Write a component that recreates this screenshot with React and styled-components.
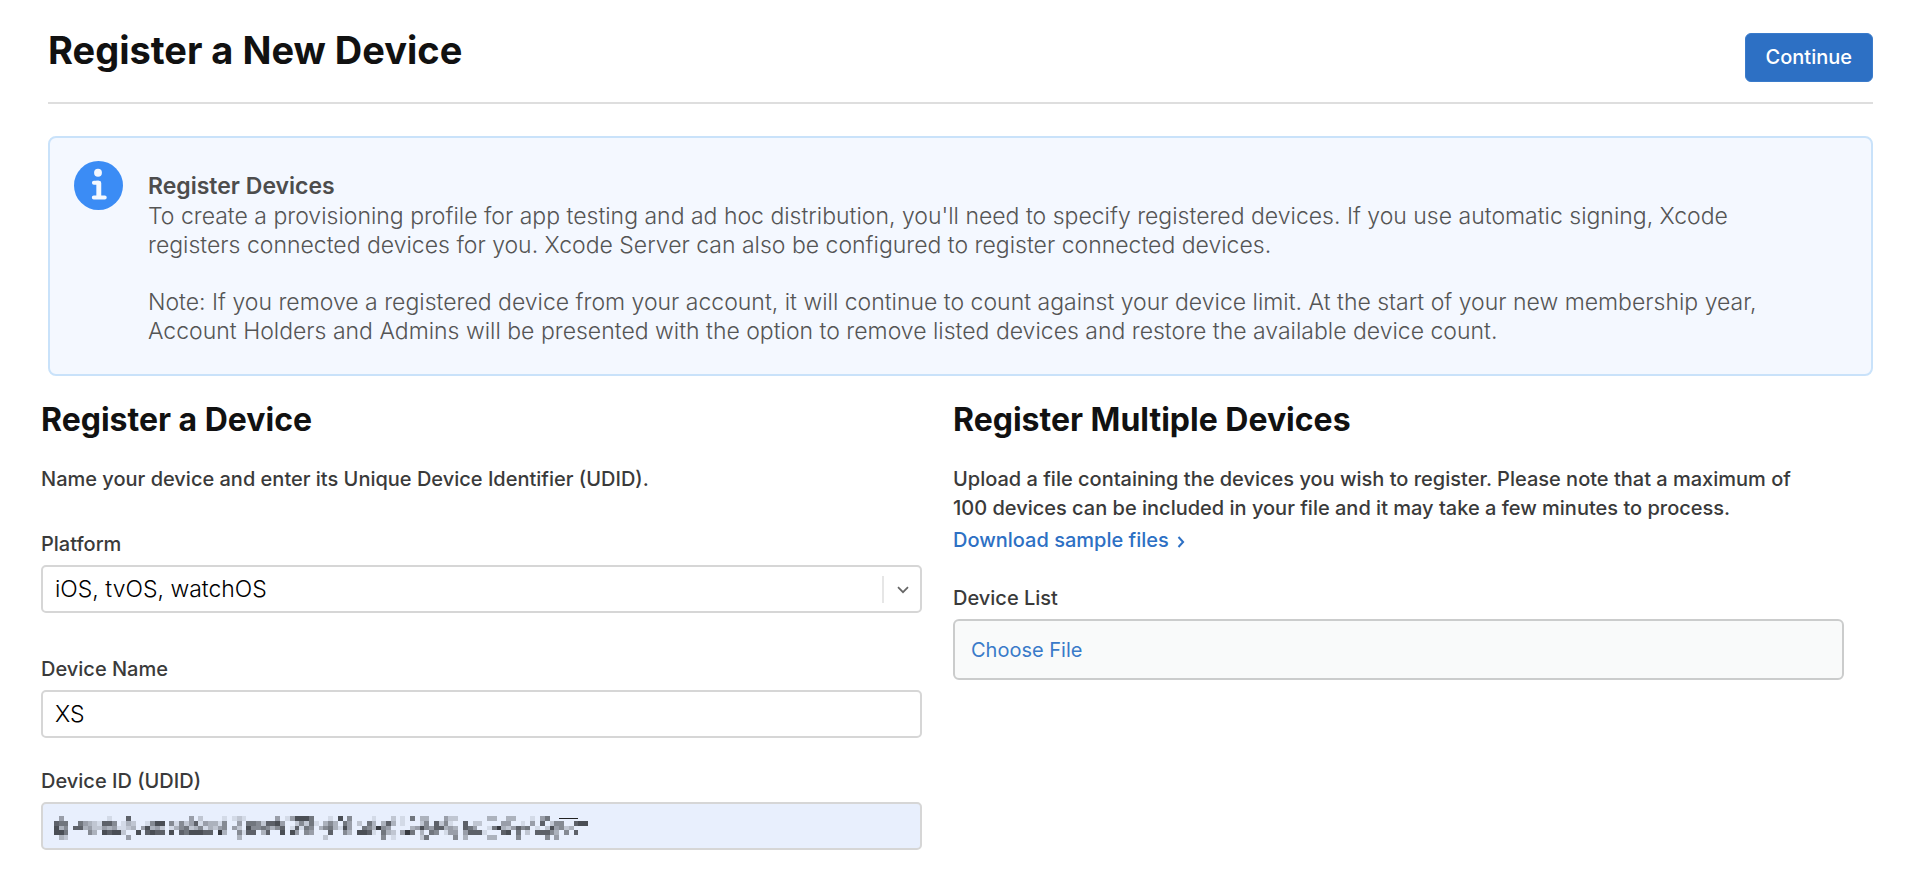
import React from 'react';
import styled, { createGlobalStyle } from 'styled-components';

const GlobalStyle = createGlobalStyle`
  *, *::before, *::after { box-sizing: border-box; }
  body {
    margin: 0;
    background: #fff;
    color: #3a3a3a;
    font-family: Inter, "Liberation Sans", sans-serif;
    font-size: 20px;
    line-height: 29px;
  }
`;

const Page = styled.main`
  padding-bottom: 44px;
`;

const Header = styled.header`
  display: flex;
  justify-content: space-between;
  align-items: flex-start;
  margin: 0 43px 0 48px;
  padding: 33px 0 20px;
  border-bottom: 2px solid #dedede;
`;

const Title = styled.h1`
  margin: 0;
  color: #111;
  font-size: 38px;
  font-weight: 700;
  line-height: 34px;
`;

const PrimaryButton = styled.button`
  height: 49px;
  padding: 0 20px;
  border: 1px solid #3a7bcb;
  border-radius: 6px;
  background: #2d70c4;
  color: #fff;
  font: 500 20px/29px Inter, "Liberation Sans", sans-serif;
  cursor: pointer;
`;

const Notice = styled.section`
  display: flex;
  gap: 25px;
  margin: 32px 43px 0 48px;
  padding: 23px 96px 28px 24px;
  border: 2px solid #c9e2fa;
  border-radius: 8px;
  background: #f4f8ff;
  color: #555;
`;

const InfoIcon = styled.svg`
  flex: none;
  width: 49px;
  height: 49px;
`;

const NoticeBody = styled.div`
  padding-top: 9px;
`;

const NoticeTitle = styled.h2`
  margin: 0;
  color: #4d4d4d;
  font-size: 23px;
  font-weight: 600;
  line-height: 32px;
`;

const NoticeText = styled.p`
  margin: 0;
  font-size: 23px;
  font-weight: 300;
  line-height: 29px;

  & + & { margin-top: 28px; }
`;

const Columns = styled.div`
  display: grid;
  grid-template-columns: 1fr 1fr;
  margin-top: 24px;
  padding: 0 51px 0 41px;
`;

const Column = styled.section`
  padding-right: ${(p) => p.$gutter}px;
`;

const ColumnTitle = styled.h2`
  margin: 0 0 25px;
  color: #111;
  font-size: 32px;
  font-weight: 700;
  line-height: 40px;
`;

const Intro = styled.p`
  margin: 0;
  padding-right: 24px;
  font-size: 20px;
  font-weight: 500;
  line-height: 29px;
`;

const SampleLink = styled.a`
  display: inline-flex;
  align-items: center;
  gap: 8px;
  margin-top: 3px;
  color: #2d70c4;
  font-size: 20px;
  font-weight: 500;
  line-height: 29px;
  text-decoration: none;
`;

const LinkArrow = styled.svg`
  width: 8px;
  height: 12px;
  margin-top: 3px;
`;

const Field = styled.div`
  position: relative;
  display: flex;
  flex-direction: column;
  gap: 6px;
  margin-top: ${(p) => p.$space}px;
`;

const Label = styled.label`
  font-size: 20px;
  font-weight: 500;
  line-height: 29px;
`;

const Control = styled.div`
  position: relative;
  display: flex;
`;

const Select = styled.select`
  appearance: none;
  width: 100%;
  height: 48px;
  padding: 0 48px 0 12px;
  border: 2px solid #d6d6d6;
  border-radius: 5px;
  background: #fff;
  color: #000;
  font: 300 23px/29px Inter, "Liberation Sans", sans-serif;
`;

const SelectMark = styled.span`
  position: absolute;
  top: 11px;
  right: 0;
  display: flex;
  align-items: center;
  justify-content: center;
  width: 40px;
  height: 27px;
  border-left: 2px solid #e6e6e6;
  pointer-events: none;
`;

const Input = styled.input`
  width: 100%;
  height: 48px;
  padding: 0 12px;
  border: 2px solid #d6d6d6;
  border-radius: 5px;
  background: ${(p) => (p.$filled ? '#e8effd' : '#fff')};
  color: #000;
  font: 300 23px/29px Inter, "Liberation Sans", sans-serif;
`;

const Redaction = styled.svg`
  position: absolute;
  top: 14px;
  left: 13px;
  width: 534px;
  height: 24px;
  pointer-events: none;
`;

const FilePicker = styled.label`
  display: flex;
  align-items: center;
  height: 61px;
  padding: 2px 16px 0;
  border: 2px solid #cbcccc;
  border-radius: 6px;
  background: #f9fafa;
  color: #3a7ac9;
  font-size: 20px;
  line-height: 29px;
  cursor: pointer;
`;

const HiddenFile = styled.input`
  position: absolute;
  bottom: 0;
  width: 1px;
  height: 1px;
  opacity: 0;
`;

/* Darkness of each block of the pixelated identifier, 0 (clear) to 9. */
const BLOCKS = [
  '0400000000010007000000000000402000010' + '1210000004014888600010805000010002010' + '6033000422000000330033000104600000000',
  '7660064321775013200158805152471433150' + '0406652778400252610353064020630373010' + '0025072510070220000440010407025500788',
  '8350773422434112304834201356235132450' + '4208556535701716503563184006539540000' + '3485477343076400169324756010284523000',
  '8860000530878820080787708076888770930' + '0517703700808405400070053088710632049' + '6030650144047771000780602077753050700',
  '0320000000000004000000000000000000000' + '0300000000000000000200000000000501000' + '0026000005030000330000500000504000000',
];

function RedactedValue() {
  return (
    <Redaction viewBox="0 0 111 5" preserveAspectRatio="none" shapeRendering="crispEdges" aria-hidden="true">
      {BLOCKS.flatMap((row, y) =>
        [...row].map((level, x) =>
          level === '0' ? null : (
            <rect key={`${x}-${y}`} x={x} y={y} width="1" height="1" fill="#22252a" fillOpacity={level / 10} />
          )
        )
      )}
      <rect x="105" y="0.4" width="4" height="0.3" fill="#222" />
    </Redaction>
  );
}

export default function App() {
  return (
    <Page>
      <GlobalStyle />
      <Header>
        <Title>Register a New Device</Title>
        <PrimaryButton type="button">Continue</PrimaryButton>
      </Header>

      <Notice>
        <InfoIcon viewBox="0 0 50 50" aria-hidden="true">
          <circle cx="25" cy="25" r="25" fill="#3b8cf5" />
          <circle cx="24.5" cy="12" r="4" fill="#f4f8ff" />
          <path d="M20.3 22.2h4.6M20.2 37.2h11.2" fill="none" stroke="#f4f8ff" strokeWidth="4" strokeLinecap="round" />
          <path d="M22.8 20.2h2.7a2.3 2.3 0 0 1 2.3 2.3V37h-5z" fill="#f4f8ff" />
        </InfoIcon>
        <NoticeBody>
          <NoticeTitle>Register Devices</NoticeTitle>
          <NoticeText>
            To create a provisioning profile for app testing and ad hoc distribution, you'll need to specify registered
            devices. If you use automatic signing, Xcode registers connected devices for you. Xcode Server can also be
            configured to register connected devices.
          </NoticeText>
          <NoticeText>
            Note: If you remove a registered device from your account, it will continue to count against your device
            limit. At the start of your new membership year, Account Holders and Admins will be presented with the
            option to remove listed devices and restore the available device count.
          </NoticeText>
        </NoticeBody>
      </Notice>

      <Columns>
        <Column $gutter={31}>
          <ColumnTitle>Register a Device</ColumnTitle>
          <Intro>Name your device and enter its Unique Device Identifier (UDID).</Intro>
          <Field $space={36}>
            <Label htmlFor="platform">Platform</Label>
            <Control>
              <Select id="platform" defaultValue="ios">
                <option value="ios">iOS, tvOS, watchOS</option>
                <option value="mac">macOS</option>
              </Select>
              <SelectMark>
                <svg width="12" height="8" viewBox="0 0 12 8" aria-hidden="true">
                  <path d="M1 1.2l5 5 5-5" fill="none" stroke="#666" strokeWidth="1.7" />
                </svg>
              </SelectMark>
            </Control>
          </Field>
          <Field $space={42}>
            <Label htmlFor="device-name">Device Name</Label>
            <Input id="device-name" type="text" defaultValue="XS" />
          </Field>
          <Field $space={29}>
            <Label htmlFor="device-id">Device ID (UDID)</Label>
            <Control>
              <Input id="device-id" type="text" $filled />
              <RedactedValue />
            </Control>
          </Field>
        </Column>

        <Column $gutter={21}>
          <ColumnTitle>Register Multiple Devices</ColumnTitle>
          <Intro>
            Upload a file containing the devices you wish to register. Please note that a maximum of 100 devices can be
            included in your file and it may take a few minutes to process.
          </Intro>
          <SampleLink href="#samples">
            Download sample files
            <LinkArrow viewBox="0 0 8 12" aria-hidden="true">
              <path d="M1.5 1l4.6 5-4.6 5" fill="none" stroke="currentColor" strokeWidth="2" />
            </LinkArrow>
          </SampleLink>
          <Field $space={29}>
            <Label as="span" id="device-list">Device List</Label>
            <FilePicker htmlFor="device-file">Choose File</FilePicker>
            <HiddenFile id="device-file" type="file" aria-labelledby="device-list" />
          </Field>
        </Column>
      </Columns>
    </Page>
  );
}
